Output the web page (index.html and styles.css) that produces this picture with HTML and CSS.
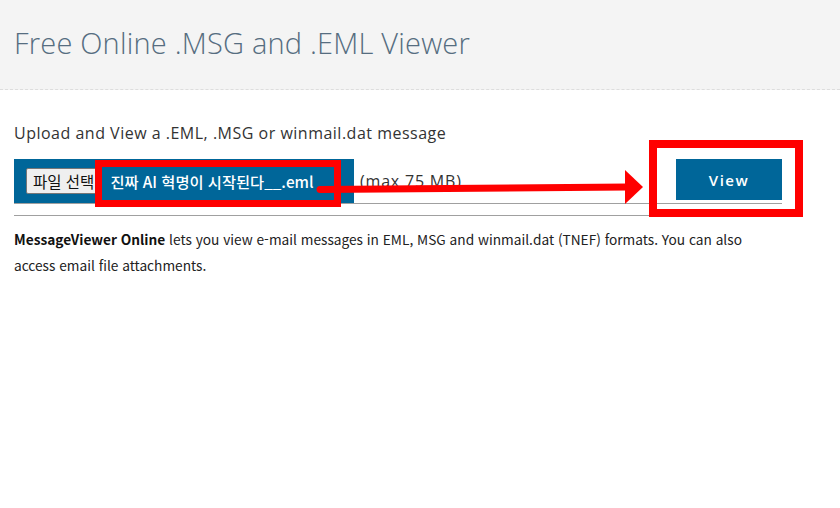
FILE: index.html
```html
<!DOCTYPE html>
<html lang="ko">
<head>
<meta charset="utf-8">
<title>Free Online .MSG and .EML Viewer</title>
<link rel="stylesheet" href="styles.css">
</head>
<body>
<header class="top">
  <h1 class="title">Free Online .MSG and .EML Viewer</h1>
</header>
<main class="content">
  <p class="lead">Upload and View a .EML, .MSG or winmail.dat message</p>
  <form class="upload-row">
    <div class="file-box">
      <span class="file-btn">파일 선택</span>
      <span class="file-name">진짜 AI 혁명이 시작된다__.eml</span>
    </div>
    <span class="max">(max 75 MB)</span>
    <button type="button" class="view-btn">View</button>
  </form>
  <hr class="sep">
  <p class="desc"><b>MessageViewer Online</b> lets you view e-mail messages in EML, MSG and winmail.dat (TNEF) formats. You can also access email file attachments.</p>
</main>

<div class="mark mark-file"></div>
<div class="mark mark-view"></div>
<svg class="arrow" width="840" height="508" viewBox="0 0 840 508">
  <line x1="320" y1="189.5" x2="628" y2="187" stroke="#ff0000" stroke-width="7" stroke-linecap="round"/>
  <polygon points="625,170 643,187 625,204" fill="#ff0000"/>
</svg>
</body>
</html>
```
FILE: styles.css
```css
html, body {
  margin: 0;
  padding: 0;
  background: #ffffff;
}
body {
  font-family: "Open Sans", "Noto Sans", "Noto Sans CJK KR", sans-serif;
  color: #333333;
  width: 840px;
  height: 508px;
  overflow: hidden;
  position: relative;
}
.top {
  background: #f4f4f4;
  height: 90px;
  border-bottom: 1px dashed #dddddd;
  box-sizing: border-box;
  padding: 23px 14px 0;
}
.title {
  margin: 0;
  font-family: "Open Sans", sans-serif;
  font-weight: 300;
  font-size: 29px;
  line-height: 40px;
  color: #566d80;
  letter-spacing: 0.2px;
}
.content {
  width: 768px;
  padding: 0 14px;
}
.lead {
  margin: 32px 0 0;
  font-size: 16px;
  line-height: 22px;
  letter-spacing: 0.5px;
  color: #333;
}
.upload-row {
  margin: 15px 0 0;
  height: 44px;
  display: flex;
  align-items: flex-start;
  border-bottom: 1px solid #a0a0a0;
}
.file-box {
  background: #006699;
  height: 44px;
  width: 340px;
  display: flex;
  align-items: center;
  padding-left: 12px;
  box-sizing: border-box;
  gap: 9px;
}
.file-btn {
  font-family: "Noto Sans CJK KR", sans-serif;
  font-size: 15.5px;
  line-height: 24px;
  color: #111;
  background: #efefef;
  border: 1px solid #767676;
  border-radius: 2px;
  padding: 0 6px;
  white-space: nowrap;
}
.file-name {
  font-family: "Noto Sans CJK KR", sans-serif;
  font-size: 15.3px;
  font-weight: 500;
  color: #ffffff;
  white-space: nowrap;
}
.max {
  font-size: 16px;
  line-height: 44px;
  letter-spacing: 0.8px;
  margin-left: 6px;
  color: #333;
}
.view-btn {
  margin-left: auto;
  width: 106px;
  height: 41px;
  border: 0;
  border-radius: 0;
  background: #006699;
  color: #ffffff;
  font-family: "Open Sans", sans-serif;
  font-size: 15px;
  font-weight: 600;
  letter-spacing: 1.5px;
  padding: 0;
}
.sep {
  margin: 11px 0 0;
  border: 0;
  border-top: 1px solid #a0a0a0;
  height: 0;
}
.desc {
  margin: 10px 0 0;
  font-family: "Noto Sans CJK KR", sans-serif;
  font-size: 13.7px;
  line-height: 26px;
  color: #222;
}
.desc b {
  font-weight: 700;
  color: #111;
}
.mark {
  position: absolute;
  border: 7px solid #ff0000;
  box-sizing: border-box;
}
.mark-file {
  left: 95px;
  top: 160px;
  width: 246px;
  height: 47px;
}
.mark-view {
  left: 649px;
  top: 140px;
  width: 154px;
  height: 77px;
  border-width: 8px;
}
.arrow {
  position: absolute;
  left: 0;
  top: 0;
  pointer-events: none;
}
```
